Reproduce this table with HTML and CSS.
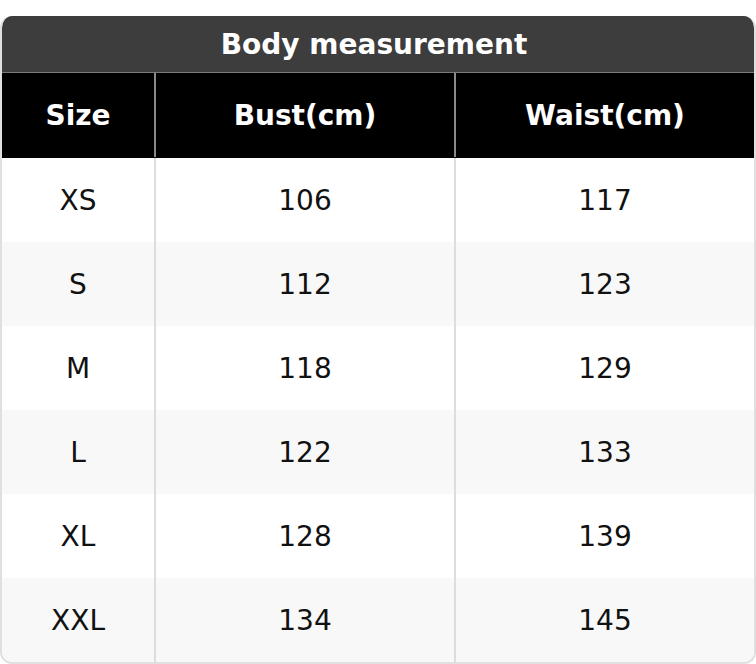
FILE: index.html
```html
<!DOCTYPE html>
<html>
<head>
<meta charset="utf-8">
<link rel="stylesheet" href="styles.css">
</head>
<body>
<div class="chart">
  <div class="title">Body measurement</div>
  <div class="row head">
    <div class="cell">Size</div>
    <div class="cell sep">Bust(cm)</div>
    <div class="cell sep">Waist(cm)</div>
  </div>
  <div class="row">
    <div class="cell">XS</div><div class="cell sep">106</div><div class="cell sep">117</div>
  </div>
  <div class="row alt">
    <div class="cell">S</div><div class="cell sep">112</div><div class="cell sep">123</div>
  </div>
  <div class="row">
    <div class="cell">M</div><div class="cell sep">118</div><div class="cell sep">129</div>
  </div>
  <div class="row alt">
    <div class="cell">L</div><div class="cell sep">122</div><div class="cell sep">133</div>
  </div>
  <div class="row">
    <div class="cell">XL</div><div class="cell sep">128</div><div class="cell sep">139</div>
  </div>
  <div class="row alt">
    <div class="cell">XXL</div><div class="cell sep">134</div><div class="cell sep">145</div>
  </div>
</div>
</body>
</html>
```
FILE: styles.css
```css
html, body {
  margin: 0;
  padding: 0;
  background: #ffffff;
}
body {
  padding-top: 16px;
  font-family: "DejaVu Sans", "Liberation Sans", sans-serif;
}
.chart {
  width: 756px;
  box-sizing: border-box;
  border: 2px solid #e0e0e0;
  border-top: none;
  border-radius: 12px;
  overflow: hidden;
  background: #ffffff;
}
.title {
  height: 56px;
  background: #3d3d3d;
  color: #ffffff;
  font-weight: bold;
  font-size: 28px;
  display: flex;
  align-items: center;
  justify-content: center;
  border-bottom: 1px solid #7a7a7a;
  margin: 0 -2px;
  padding-right: 8px;
}
.row {
  display: grid;
  grid-template-columns: 152px 300px 300px;
  height: 84px;
}
.cell {
  box-sizing: border-box;
  display: flex;
  align-items: center;
  justify-content: center;
  font-size: 28px;
  color: #111111;
}
.sep {
  border-left: 2px solid #dddddd;
}
.head {
  background: #000000;
  height: 85px;
  border-bottom: 1px solid #000000;
  box-sizing: border-box;
}
.head .cell {
  color: #ffffff;
  font-weight: bold;
}
.head .sep {
  border-left-color: #8a8a8a;
}
.alt {
  background: #f8f8f8;
}
```
